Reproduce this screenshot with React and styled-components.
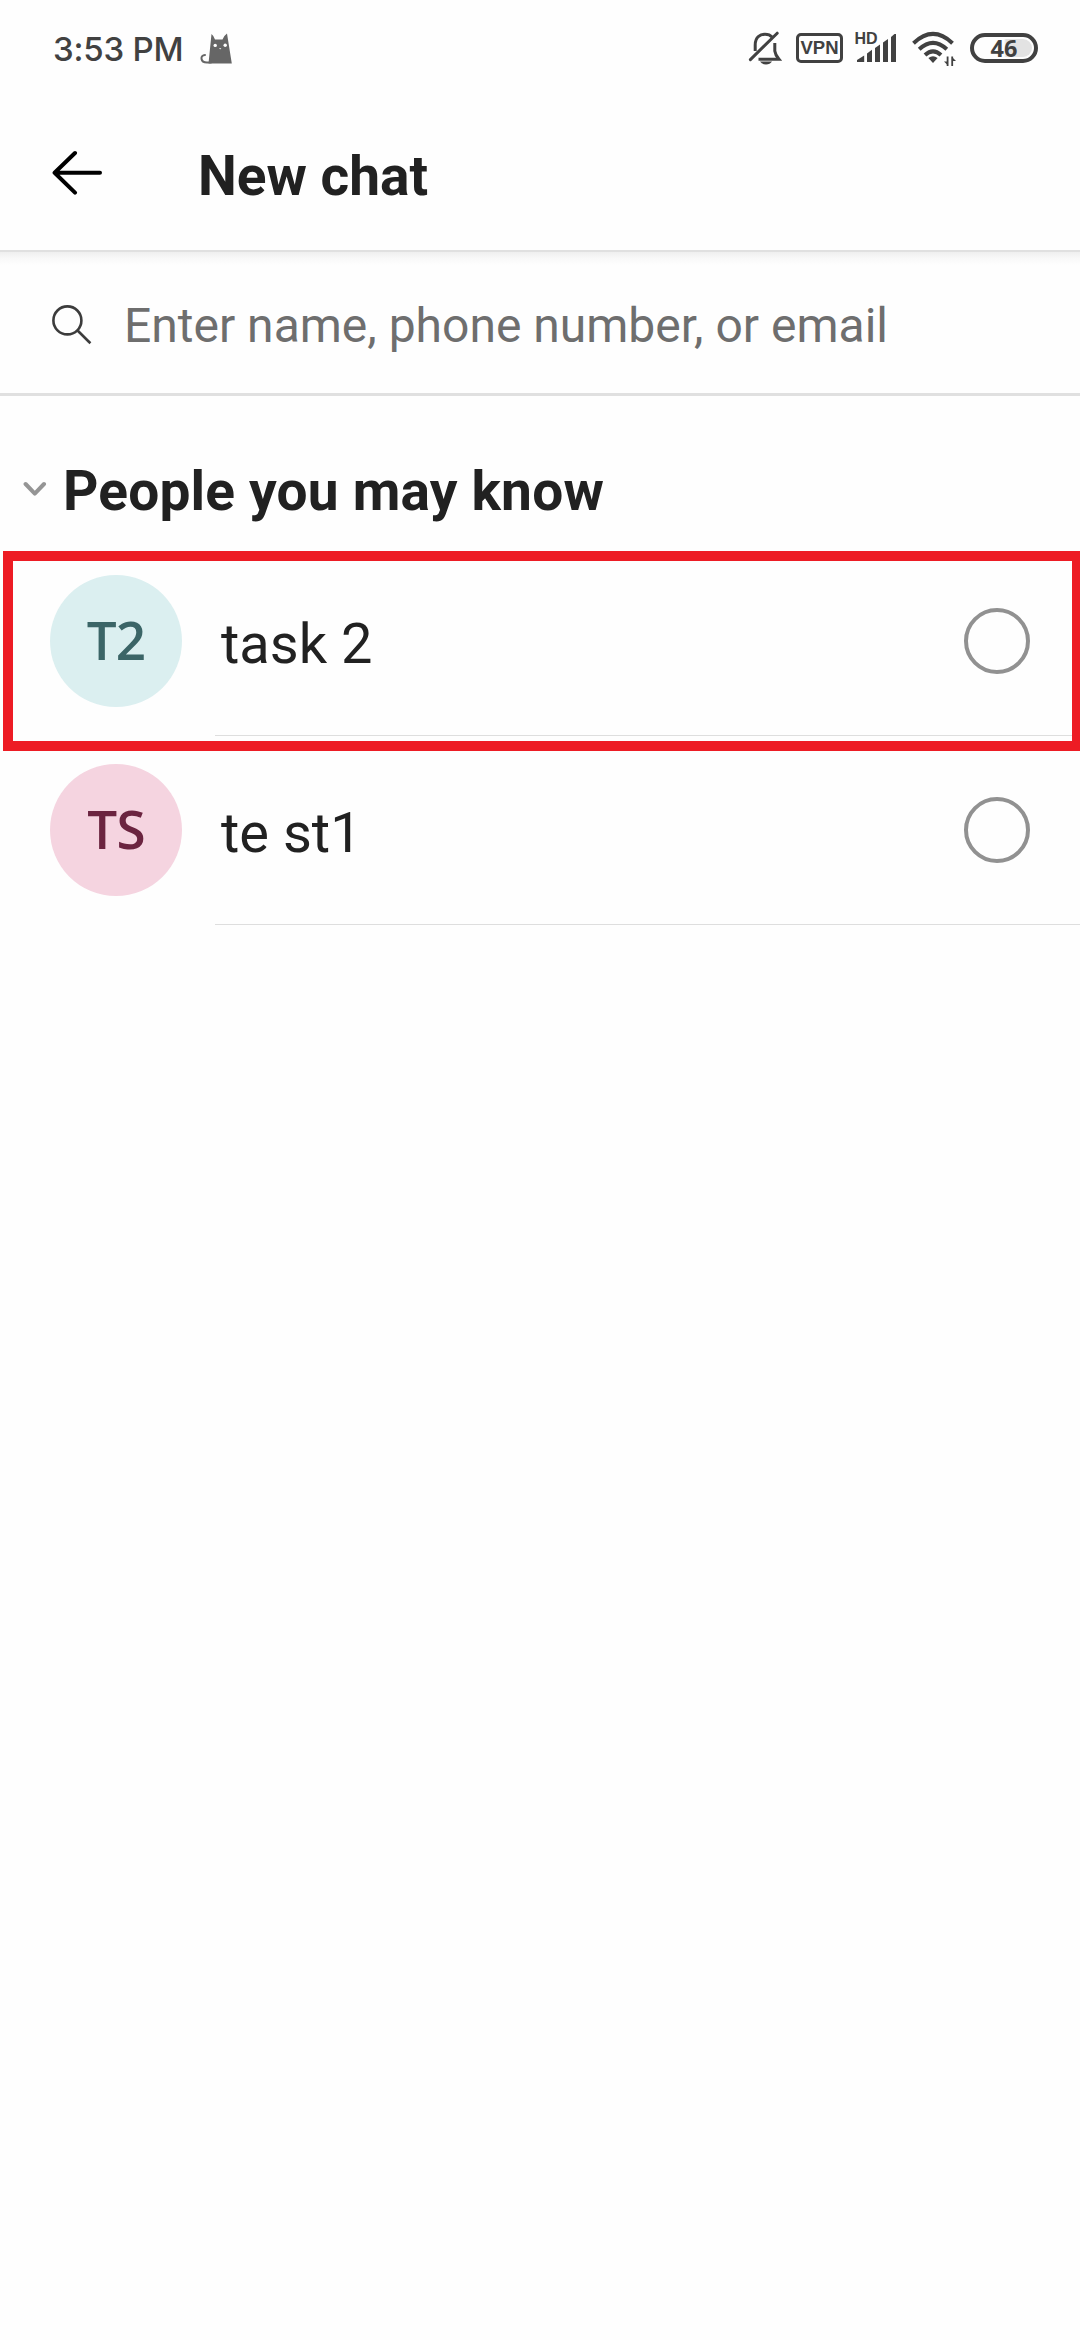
import React from "react";
import styled, { createGlobalStyle } from "styled-components";

const GlobalStyle = createGlobalStyle`
  * { box-sizing: border-box; }
  html, body { margin: 0; background: #fefefe; }
  body { font-family: Roboto, "Liberation Sans", sans-serif; color: #212121; overflow: hidden; }
  svg { display: block; flex: none; }
`;

const Screen = styled.div`
  width: 1080px;
  height: 2340px;
  display: flex;
  flex-direction: column;
  background: #fefefe;
  overflow: hidden;
`;

const StatusBar = styled.div`
  flex: none;
  height: 96px;
  padding: 0 42px 0 53px;
  display: flex;
  align-items: center;
  justify-content: space-between;
  color: #414141;
`;

const StatusLeft = styled.div`
  display: flex;
  align-items: center;
  gap: 17px;
`;

const Clock = styled.span`
  font: 500 33px/40px Inter, "Liberation Sans", sans-serif;
  letter-spacing: -0.2px;
  white-space: nowrap;
  padding-top: 2px;
`;

const StatusIcons = styled.div`
  display: flex;
  align-items: center;
`;

const VpnBadge = styled.span`
  width: 47px;
  height: 30px;
  margin: 0 12px 0 14px;
  border: 3px solid #414141;
  border-radius: 5px;
  display: flex;
  align-items: center;
  justify-content: center;
  font: 700 18.5px/24px "Liberation Sans", sans-serif;
`;

const WifiSlot = styled.span`
  margin: 0 13px 0 13px;
`;

const Battery = styled.span`
  width: 68px;
  height: 30px;
  border: 4px solid #414141;
  border-radius: 15px;
  display: flex;
  align-items: center;
  justify-content: center;
  font: 700 23.5px/20px "Open Sans", sans-serif;
  background: linear-gradient(90deg, #fefefe 0 28px, #e3e3e3 30px) content-box;
  padding: 2px;
`;

const Header = styled.header`
  flex: none;
  height: 154px;
  padding-left: 52px;
  display: flex;
  align-items: flex-start;
  gap: 96px;
`;

const BackButton = styled.div`
  padding-top: 54px;
`;

const Title = styled.h1`
  margin: 48px 0 0;
  font-size: 55px;
  line-height: 64px;
  font-weight: 700;
  white-space: nowrap;
`;

const SearchBar = styled.div`
  flex: none;
  height: 146px;
  padding-left: 52px;
  border-bottom: 3px solid #e0e0e0;
  background: linear-gradient(#e0e0e0 0 2px, #efefef 2px, #f8f8f8 8px, #fefefe 15px);
  display: flex;
  align-items: flex-start;
  gap: 32px;
`;

const SearchIcon = styled.div`
  padding-top: 55px;
`;

const Placeholder = styled.span`
  margin-top: 46px;
  font-size: 48px;
  line-height: 60px;
  color: #6e6e6e;
  white-space: nowrap;
`;

const SectionHeader = styled.div`
  flex: none;
  height: 151px;
  padding-left: 23px;
  display: flex;
  align-items: flex-start;
  gap: 16px;
`;

const Chevron = styled.div`
  padding-top: 85px;
`;

const SectionTitle = styled.h2`
  margin: 63px 0 0;
  font-size: 55px;
  line-height: 64px;
  font-weight: 700;
  letter-spacing: 0.2px;
  white-space: nowrap;
`;

const List = styled.div`
  position: relative;
  flex: none;
`;

const Row = styled.div`
  height: 189px;
  padding-left: 50px;
  display: flex;
`;

const Avatar = styled.div`
  flex: none;
  width: 132px;
  height: 132px;
  margin: 28px 33px 0 0;
  padding-bottom: 2px;
  border-radius: 50%;
  display: flex;
  align-items: center;
  justify-content: center;
  background: ${(p) => p.$bg};
  color: ${(p) => p.$fg};
  font: 650 53px/64px "Open Sans", "Noto Sans", sans-serif;
  letter-spacing: -0.8px;
`;

const RowBody = styled.div`
  flex: 1;
  padding: 61px 50px 0 6px;
  border-bottom: 1px solid #dedede;
  display: flex;
  align-items: flex-start;
  justify-content: space-between;
`;

const Name = styled.span`
  font-size: 56px;
  line-height: 72px;
  white-space: nowrap;
`;

const Radio = styled.span`
  width: 66px;
  height: 66px;
  border: 4px solid #919191;
  border-radius: 50%;
`;

const Highlight = styled.div`
  position: absolute;
  left: 3px;
  top: 4px;
  width: 1079px;
  height: 200px;
  border: 10px solid #ed1c24;
`;

const people = [
  { initials: "T2", name: "task 2", bg: "#dbeff0", fg: "#3b6567" },
  { initials: "TS", name: "te st1", bg: "#f5d4e0", fg: "#6b2440" },
];

const CatIcon = () => (
  <svg width="33" height="31" viewBox="0 0 33 31">
    <path d="M8.5 30.5 L11.5 1 Q14 3 15 6.5 H22.5 Q24 2.5 27 0.5 L31.8 30.5Z" fill="#666" />
    <path d="M5 22 C0 22 0 29.5 7 29.5 H11" fill="none" stroke="#666" strokeWidth="2" strokeLinecap="round" />
    <circle cx="15.2" cy="12.4" r="1.7" fill="#fff" />
    <circle cx="25.2" cy="12.2" r="1.7" fill="#fff" />
    <path d="M19 15 H21.4 L20.2 16.4Z" fill="#ddd" />
  </svg>
);

const BellOffIcon = () => (
  <svg width="34" height="34" viewBox="0 0 34 34" fill="none" stroke="#414141" strokeWidth="3">
    <path d="M7.2 20 V14 C7.2 5.5 13 3.2 17 3.2 C20 3.2 22.5 4.2 24 6" />
    <path d="M26.8 12 V20 Q27.3 24 31 28.3 H10.5" />
    <path d="M2.4 28.6 L29.2 2.2" strokeLinecap="round" />
    <path d="M12 30.5 H24 Q22 33.5 18 33.5 Q14 33.5 12 30.5Z" fill="#414141" stroke="none" />
  </svg>
);

const SignalIcon = () => (
  <svg width="43" height="34" viewBox="0 0 43 34" fill="#414141">
    <text x="-0.5" y="12.5" fontFamily="Liberation Sans, sans-serif" fontWeight="700" fontSize="16" textLength="23">HD</text>
    <path d="M2 31 V29 L9.2 24.5 V31Z" />
    <path d="M12 31 V22.5 L17 18.8 V31Z" />
    <path d="M20 31 V17 L25 13.5 V31Z" />
    <path d="M28 31 V11.5 L33 8 V31Z" />
    <path d="M36 31 V6 L39.5 3 H41 V31Z" />
  </svg>
);

const WifiIcon = () => (
  <svg width="46" height="36" viewBox="0 0 46 36" fill="none" stroke="#414141" strokeWidth="4">
    <path d="M2.5 13.2 Q22 -5.4 41.5 13.2" />
    <path d="M8.2 19.2 Q22 6.4 35.8 19.2" />
    <path d="M14 25 Q22 17.6 30 25" />
    <path d="M17.4 28 Q22 24.4 26.6 28 L22 33Z" fill="#414141" stroke="none" />
    <path d="M36.6 36 V26.5 M41.2 26.5 V36" strokeWidth="1.8" />
    <path d="M33 31.5 H37 V35.5Z M45 31 H41 V27Z" fill="#414141" stroke="none" />
  </svg>
);

export default function App() {
  return (
    <>
      <GlobalStyle />
      <Screen>
        <StatusBar>
          <StatusLeft>
            <Clock>3:53 PM</Clock>
            <CatIcon />
          </StatusLeft>
          <StatusIcons>
            <BellOffIcon />
            <VpnBadge>VPN</VpnBadge>
            <SignalIcon />
            <WifiSlot>
              <WifiIcon />
            </WifiSlot>
            <Battery>46</Battery>
          </StatusIcons>
        </StatusBar>

        <Header>
          <BackButton>
            <svg width="50" height="46" viewBox="0 0 50 46" fill="none" stroke="#000" strokeWidth="4" strokeLinecap="round" strokeLinejoin="round">
              <path d="M48 22.8 H2.6 M23 3 L2.6 22.8 L23 42.6" />
            </svg>
          </BackButton>
          <Title>New chat</Title>
        </Header>

        <SearchBar>
          <SearchIcon>
            <svg width="40" height="40" viewBox="0 0 40 40" fill="none" stroke="#3c3c3c" strokeWidth="2.6">
              <circle cx="15.4" cy="15.4" r="14" />
              <path d="M25.3 25.3 L38.4 38.2" />
            </svg>
          </SearchIcon>
          <Placeholder>Enter name, phone number, or email</Placeholder>
        </SearchBar>

        <SectionHeader>
          <Chevron>
            <svg width="24" height="16" viewBox="0 0 24 16" fill="none" stroke="#959595" strokeWidth="4" strokeLinecap="round" strokeLinejoin="round">
              <path d="M2.6 3 L11.8 12.6 L21 3" />
            </svg>
          </Chevron>
          <SectionTitle>People you may know</SectionTitle>
        </SectionHeader>

        <List>
          {people.map((p) => (
            <Row key={p.name}>
              <Avatar $bg={p.bg} $fg={p.fg}>{p.initials}</Avatar>
              <RowBody>
                <Name>{p.name}</Name>
                <Radio />
              </RowBody>
            </Row>
          ))}
          <Highlight />
        </List>
      </Screen>
    </>
  );
}
